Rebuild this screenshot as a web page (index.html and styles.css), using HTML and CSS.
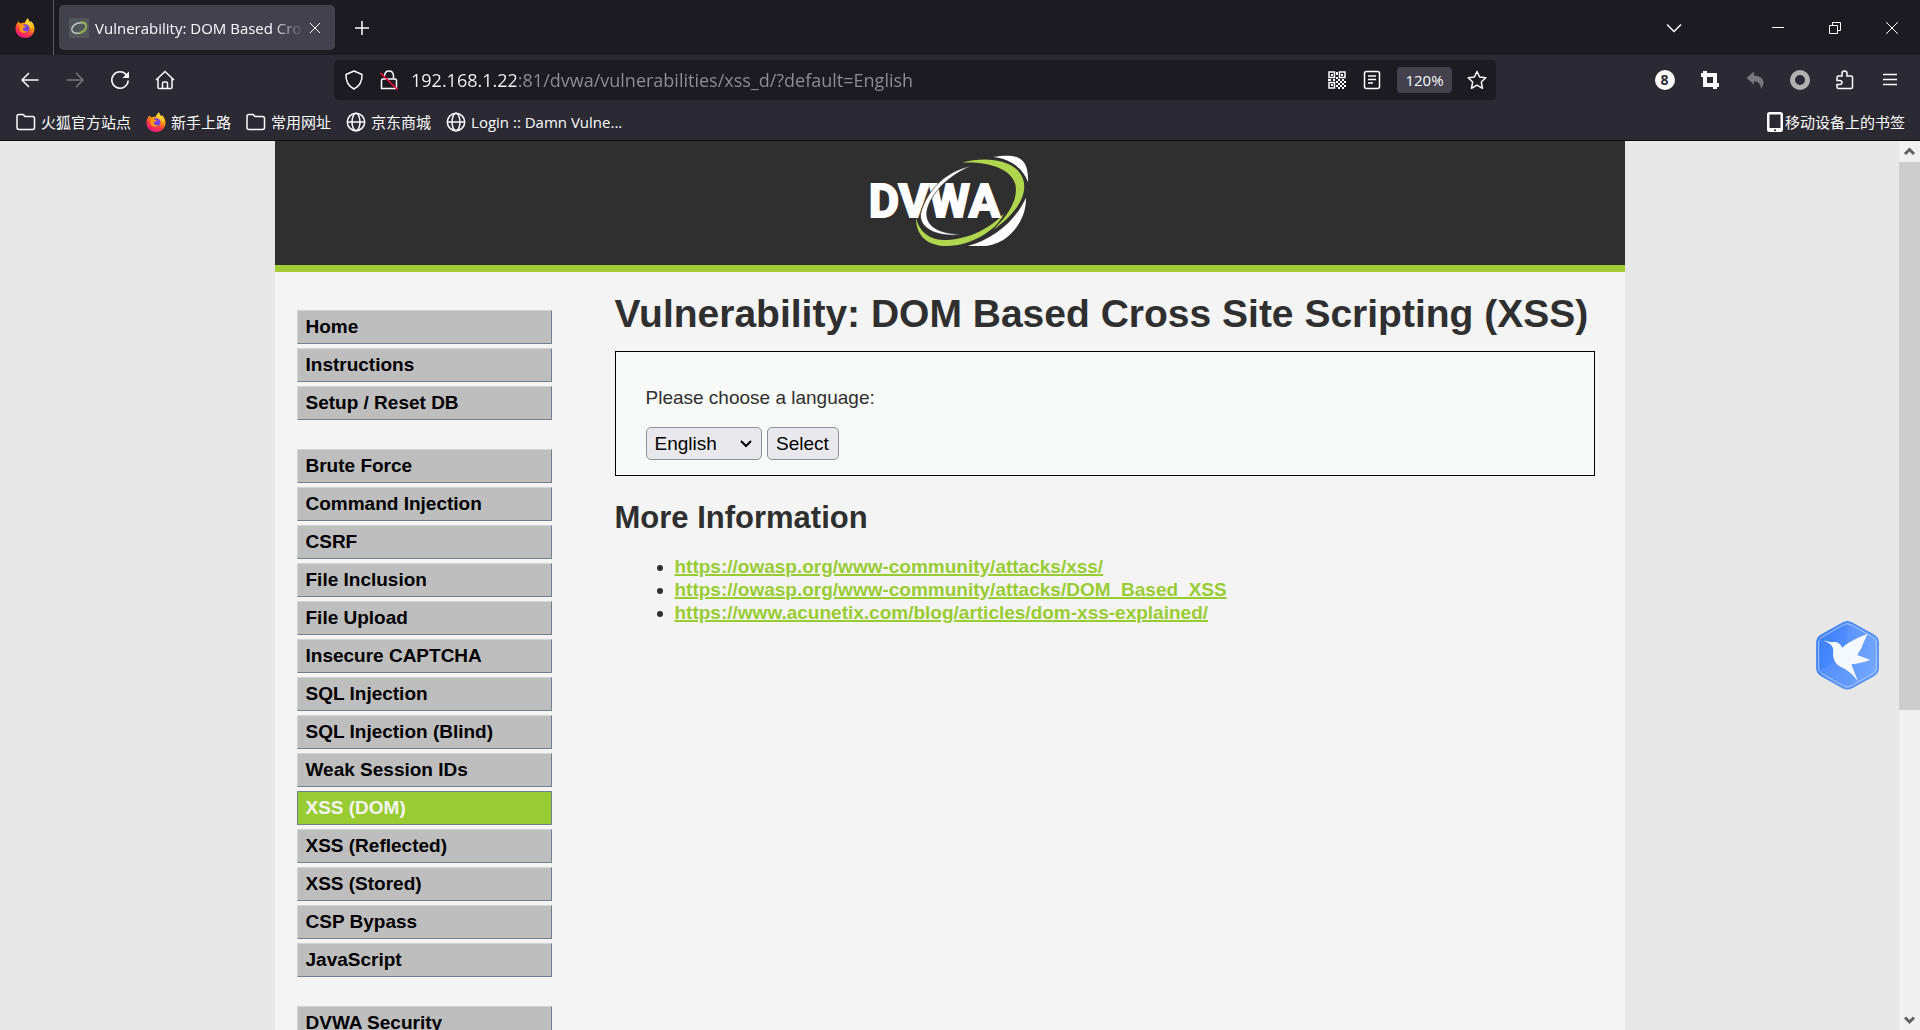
FILE: index.html
```html
<!DOCTYPE html>
<html lang="en">
<head>
<meta charset="utf-8">
<title>Vulnerability: DOM Based Cross Site Scripting (XSS)</title>
<link rel="stylesheet" href="styles.css">
</head>
<body>
<svg class="defs" aria-hidden="true">
  <defs>
    <linearGradient id="flame" x1="0.8" y1="0" x2="0.3" y2="1">
      <stop offset="0" stop-color="#fff44f"/><stop offset="0.4" stop-color="#ff980e"/>
      <stop offset="0.7" stop-color="#ff3647"/><stop offset="1" stop-color="#e31587"/>
    </linearGradient>
    <symbol id="firefox" viewBox="0 0 20 20">
      <path fill="url(#flame)" d="M3.500 3.500 5.500 5.500C7 4.500 8 4.500 9.500 5 10 3 11.500 1.500 13 .2 13.200 2 14 3 15.200 4.200L16 3C18.500 5.500 19.800 8.500 19.500 11.500 19 16.500 15 20 10 20 4.500 20 .5 16 .5 10.500.5 7.500 1.500 5.500 3.500 3.500Z"/>
      <circle cx="10.200" cy="10.500" r="4.200" fill="#7542e5"/>
      <path fill="#ff980e" d="M2.500 7.500C4.500 6 7 6 8.500 7.500L11 8.300C10.500 9.500 8.500 9.300 8 10.500 7.500 12.500 9.500 14 12.500 12.800 11 15.500 7.500 15.500 5.500 13.500 4 12 4 9 5 7.500Z"/>
      <path fill="#ffd335" d="M13 .2C13.200 3 17.500 5.500 16.500 11 15.500 9 14.500 6.500 11.500 6 10.500 5.500 10.500 3 13 .2Z"/>
    </symbol>
    <symbol id="folder" viewBox="0 0 20 20"><path d="M1 15.500V4.500Q1 2.500 3 2.500H6.500Q7.500 2.500 8.200 3.500L9 4.500H16.500Q18.500 4.500 18.500 6.500V15.500Q18.500 17.500 16.500 17.500H3Q1 17.500 1 15.500Z"/></symbol>
    <symbol id="globe" viewBox="0 0 20 20"><circle cx="10" cy="10" r="8.700"/><ellipse cx="10" cy="10" rx="4" ry="8.700"/><path d="M1.500 10H18.500"/></symbol>
    <symbol id="close" viewBox="0 0 20 20"><path d="M5 5 15 15M15 5 5 15"/></symbol>
  </defs>
</svg>

<header class="browser">
  <div class="tabstrip">
    <div class="pinned"><svg class="icon"><use href="#firefox"/></svg></div>
    <div class="tab">
      <svg class="icon" viewBox="0 0 20 20"><path class="fav-bg" d="M0 0H20V20H0Z"/><ellipse class="fav-ring" cx="10" cy="10" rx="7.500" ry="5" transform="rotate(-20 10 10)"/><path class="fav-green" d="M12 4Q18 4 17 9T10 15"/></svg>
      <span class="tab-title">Vulnerability: DOM Based Cro</span>
      <button class="tab-close" aria-label="Close tab"><svg class="icon"><use href="#close"/></svg></button>
    </div>
    <button class="tool new-tab" aria-label="New tab"><svg class="icon" viewBox="0 0 20 20"><path d="M10 3V17M3 10H17"/></svg></button>
    <div class="window-controls">
      <button class="tool list-tabs" aria-label="List all tabs"><svg class="icon" viewBox="0 0 20 20"><path d="M3 6.500 10 13.500 17 6.500"/></svg></button>
      <button class="win" aria-label="Minimize"><svg class="icon thin" viewBox="0 0 20 20"><path d="M4 9.500H16"/></svg></button>
      <button class="win" aria-label="Restore"><svg class="icon thin" viewBox="0 0 20 20"><path d="M4.500 7.500H12.500V15.500H4.500ZM7.500 7.500V4.500H15.500V12.500H12.500"/></svg></button>
      <button class="win" aria-label="Close"><svg class="icon thin" viewBox="0 0 20 20"><path d="M4 4 16 16M16 4 4 16"/></svg></button>
    </div>
  </div>

  <div class="navbar">
    <div class="nav-group">
      <button class="tool" aria-label="Back"><svg class="icon" viewBox="0 0 20 20"><path d="M18.500 10H2M9 3 2 10 9 17"/></svg></button>
      <button class="tool dim" aria-label="Forward"><svg class="icon" viewBox="0 0 20 20"><path d="M1.500 10H18M11 3 18 10 11 17"/></svg></button>
      <button class="tool" aria-label="Reload"><svg class="icon" viewBox="0 0 20 20"><path d="M16.500 5A8.200 8.200 0 1 0 18.200 10.500"/><path class="solid" d="M19 1.500V8H12.500Z"/></svg></button>
      <button class="tool" aria-label="Home"><svg class="icon" viewBox="0 0 20 20"><path d="M1 10 10 1.500 19 10M3 8.500V17.500Q3 18.500 4 18.500H16Q17 18.500 17 17.500V8.500M7.500 18.500V13.500Q7.500 12 9 12H11Q12.500 12 12.500 13.500V18.500"/></svg></button>
    </div>
    <div class="urlbar">
      <svg class="icon" viewBox="0 0 20 20"><path d="M10 1 18 4.500Q18.500 14.500 10 19 1.500 14.500 2 4.500Z" stroke-linejoin="round"/></svg>
      <svg class="icon" viewBox="0 0 20 20"><path d="M5.500 6V5.500Q6 1 10 1T14.500 5.500V9M2.500 18.500V10.500Q2.500 9 4 9H16Q17.500 9 17.500 10.500V18.500Z"/><path class="slash" d="M1.500 3 18.500 19.500"/></svg>
      <input class="url" type="text" aria-label="Address" value="192.168.1.22:81/dvwa/vulnerabilities/xss_d/?default=English">
      <svg class="icon" viewBox="0 0 20 20"><path d="M2 2H7.500V7.500H2ZM12.500 2H18V7.500H12.500ZM2 12.500H7.500V18H2Z"/><path class="solid" d="M4 4H6V6H4ZM14 4H16V6H14ZM4 14H6V16H4ZM9 2H11V5H9ZM9 7H11V9H9ZM1 9H4V11H1ZM6 9H8V11H6ZM11 9H13V11H11ZM15 9H17V11H15ZM9 11H11V13H9ZM13 11H15V13H13ZM17 11H19V13H17ZM11 13H13V15H11ZM15 13H17V15H15ZM9 15H11V17H9ZM13 15H15V17H13ZM17 15H19V17H17ZM11 17H13V19H11ZM15 17H17V19H15Z"/></svg>
      <svg class="icon" viewBox="0 0 20 20"><path d="M4.500 1.500H15.500Q17.500 1.500 17.500 3.500V16.500Q17.500 18.500 15.500 18.500H4.500Q2.500 18.500 2.500 16.500V3.500Q2.500 1.500 4.500 1.500ZM6 6H14M6 9.500H14M6 13H11"/></svg>
      <button class="zoom-level">120%</button>
      <svg class="icon" viewBox="0 0 20 20"><path stroke-linejoin="round" d="M10 1.500 12.600 7 18.800 7.700 14.300 12 15.500 18.300 10 15.200 4.500 18.300 5.700 12 1.200 7.700 7.400 7Z"/></svg>
    </div>
    <div class="nav-group">
      <button class="tool badge-tool" aria-label="Extension, 8 items"><span class="eight">8</span></button>
      <button class="tool" aria-label="Capture"><svg class="icon heavy" viewBox="0 0 20 20"><path d="M1 5H15V19M5 1V15H19"/></svg></button>
      <button class="tool dim" aria-label="Undo"><svg class="icon" viewBox="0 0 20 20"><path class="solid" d="M1.500 8 9 1.500V5.500Q18.500 6 18.500 13 18.500 16 16 19 15.500 11.500 9 11V14.500Z"/></svg></button>
      <button class="tool" aria-label="Proxy off"><svg class="icon" viewBox="0 0 20 20"><circle class="ring" cx="10" cy="10" r="7.500"/></svg></button>
      <button class="tool" aria-label="Extensions"><svg class="icon" viewBox="0 0 20 20"><path d="M2 7.500Q2 6 3.500 6H7V3.500Q7 1 9.500 1T12 3.500V6H16Q17.500 6 17.500 7.500V17Q17.500 18.500 16 18.500H3.500Q2 18.500 2 17V14.500H4.500Q7 14.500 7 12.500T4.500 10.500H2Z"/></svg></button>
      <button class="tool" aria-label="Menu"><svg class="icon" viewBox="0 0 20 20"><path d="M3 4.500H17M3 9.500H17M3 14.500H17"/></svg></button>
    </div>
  </div>

  <nav class="bookmarks" aria-label="Bookmarks">
    <a href="#"><svg class="icon"><use href="#folder"/></svg>火狐官方站点</a>
    <a href="#"><svg class="icon"><use href="#firefox"/></svg>新手上路</a>
    <a href="#"><svg class="icon"><use href="#folder"/></svg>常用网址</a>
    <a href="#"><svg class="icon"><use href="#globe"/></svg>京东商城</a>
    <a href="#"><svg class="icon"><use href="#globe"/></svg>Login :: Damn Vulne...</a>
    <a class="mobile" href="#"><svg class="icon phone" viewBox="0 0 16 20"><path class="solid" d="M2.500 0H13.500Q16 0 16 2.500V17.500Q16 20 13.500 20H2.500Q0 20 0 17.500V2.500Q0 0 2.500 0ZM2.500 2.500V16H13.500V2.500ZM7 17.500V19H9V17.500Z" fill-rule="evenodd"/></svg>移动设备上的书签</a>
  </nav>
</header>

<div class="viewport">
  <div class="scroll-area">
    <div class="container">
      <div class="masthead">
        <svg class="logo" viewBox="90 60 477 276" role="img" aria-label="DVWA">
          <path class="lime" d="M366 83C430 65 500 73 533 106 575 150 550 222 460 284 510 235 535 190 526 148 512 98 440 79 366 83Z"/>
          <path class="white" d="M460 66C490 61 512 61 530 66 553 74 566 96 564 142 552 104 515 72 460 66Z"/>
          <path class="white" d="M558 188C560 270 490 336 425 333H383C460 312 525 260 558 188Z"/>
          <path class="lime" d="M228 248C228 305 265 333 320 333 395 332 470 285 492 236 440 290 370 315 310 315 265 312 238 290 228 248Z"/>
          <text class="logo-text" x="86" y="247">DVWA</text>
          <path class="arc" d="M394 93C325 105 262 160 242 235 236 280 290 307 364 299 300 295 260 278 260 235 264 190 310 128 394 93Z"/>
        </svg>
      </div>
      <div class="columns">
        <nav class="menu" aria-label="Main">
          <ul>
            <li><a href="#">Home</a></li>
            <li><a href="#">Instructions</a></li>
            <li><a href="#">Setup / Reset DB</a></li>
          </ul>
          <ul>
            <li><a href="#">Brute Force</a></li>
            <li><a href="#">Command Injection</a></li>
            <li><a href="#">CSRF</a></li>
            <li><a href="#">File Inclusion</a></li>
            <li><a href="#">File Upload</a></li>
            <li><a href="#">Insecure CAPTCHA</a></li>
            <li><a href="#">SQL Injection</a></li>
            <li><a href="#">SQL Injection (Blind)</a></li>
            <li><a href="#">Weak Session IDs</a></li>
            <li><a class="selected" href="#">XSS (DOM)</a></li>
            <li><a href="#">XSS (Reflected)</a></li>
            <li><a href="#">XSS (Stored)</a></li>
            <li><a href="#">CSP Bypass</a></li>
            <li><a href="#">JavaScript</a></li>
          </ul>
          <ul>
            <li><a href="#">DVWA Security</a></li>
          </ul>
        </nav>
        <main class="content">
          <h1>Vulnerability: DOM Based Cross Site Scripting (XSS)</h1>
          <form class="vulnerable">
            <label for="language">Please choose a language:</label>
            <div class="form-row">
              <span class="select-wrap">
                <select id="language" name="default"><option>English</option><option>French</option><option>Spanish</option><option>German</option></select>
                <svg class="select-arrow" viewBox="0 0 12 8" aria-hidden="true"><path d="M1 1 6 6 11 1"/></svg>
              </span>
              <button class="submit" type="button">Select</button>
            </div>
          </form>
          <h2>More Information</h2>
          <ul class="links">
            <li><a href="#">https://owasp.org/www-community/attacks/xss/</a></li>
            <li><a href="#">https://owasp.org/www-community/attacks/DOM_Based_XSS</a></li>
            <li><a href="#">https://www.acunetix.com/blog/articles/dom-xss-explained/</a></li>
          </ul>
        </main>
      </div>
    </div>
  </div>
  <div class="scrollbar" aria-hidden="true">
    <svg class="scroll-arrow" viewBox="0 0 21 21"><path d="M6 13 10.500 8.500 15 13"/></svg>
    <div class="track"><div class="thumb"></div></div>
    <svg class="scroll-arrow" viewBox="0 0 21 21"><path d="M6 8.500 10.500 13 15 8.500"/></svg>
  </div>
  <svg class="bird" viewBox="105 60 195 213" role="img" aria-label="Download helper">
    <defs><linearGradient id="hex" x1="0" y1="0.3" x2="1" y2="0.6"><stop offset="0" stop-color="#3a7ffb"/><stop offset="1" stop-color="#6aa0fd"/></linearGradient></defs>
    <path fill="url(#hex)" stroke="#4a86ee" stroke-width="3" d="M189 68Q202 61 215 68L284 106Q295 113 295 126V206Q295 219 284 226L215 264Q202 271 189 264L121 226Q110 219 110 206V126Q110 113 121 106Z"/>
    <path fill="#fff" fill-opacity="0.080" d="M202 68V166L120 212Q145 245 202 268L290 215V118Z"/>
    <path fill="none" stroke="#a9c9ff" stroke-width="3" d="M191 74Q202 68 213 74L279 111Q289 117 289 128V204Q289 215 279 221L213 258Q202 264 191 258L126 221Q116 215 116 204V128Q116 117 126 111Z"/>
    <path fill="#f4f8ff" d="M128 121 155 127C168 123 181 128 187 143 205 125 235 112 263 101L248 134C245 147 236 155 232 165L271 180C252 187 232 191 214 193L234 244C220 225 205 212 188 203 165 195 156 175 160 150 158 135 148 130 128 121Z"/>
  </svg>
</div>
</body>
</html>
```
FILE: styles.css
```css
* { box-sizing: border-box; }

body {
  margin: 0;
  height: 100vh;
  display: flex;
  flex-direction: column;
  overflow: hidden;
  font-family: "Liberation Sans", sans-serif;
  font-size: 19px;
  line-height: 23px;
  color: #2f2f2f;
}

button { padding: 0; border: 0; background: none; color: inherit; font: inherit; }
.defs { position: absolute; width: 0; height: 0; }

/* Browser chrome */
.browser {
  flex: none;
  background: #2b2a33;
  border-bottom: 1px solid #0c0c0d;
  color: #fbfbfe;
  font-family: "Open Sans", "Noto Sans CJK SC", sans-serif;
  font-size: 15px;
  line-height: 20px;
}

.icon {
  display: block;
  flex: none;
  width: 20px;
  height: 20px;
  fill: none;
  stroke: currentColor;
  stroke-width: 1.5;
}
.icon use[href="#firefox"] { stroke: none; }
.icon .solid { fill: currentColor; stroke: none; }
.thin { stroke-width: 1; }
.heavy { stroke-width: 4; }
.slash { stroke: #ff0039; }
.ring { stroke: #b1b1b3; stroke-width: 5; }

.tabstrip { display: flex; align-items: center; height: 55px; background: #1c1b22; }
.pinned {
  display: flex;
  align-items: center;
  height: 55px;
  width: 54px;
  padding-left: 15px;
  border-right: 1px solid #5b5b66;
}
.tab {
  display: flex;
  align-items: center;
  width: 276px;
  height: 45px;
  margin-left: 5px;
  padding: 0 10px;
  border-radius: 5px;
  background: #42414d;
}
.fav-bg { fill: #50565a; stroke: none; }
.fav-ring { stroke: #c4c8c8; stroke-width: 1.5; }
.fav-green { stroke: #8faa4c; stroke-width: 2; }
.tab-title {
  flex: 1;
  min-width: 0;
  margin-left: 6px;
  overflow: hidden;
  white-space: nowrap;
  -webkit-mask-image: linear-gradient(to right, #000 84%, transparent);
  mask-image: linear-gradient(to right, #000 84%, transparent);
}
.tab-close .icon { stroke-width: 1; }

.tool { display: flex; align-items: center; justify-content: center; width: 45px; height: 40px; }
.dim { color: #78777d; }
.new-tab { margin-left: 4px; }
.window-controls { display: flex; align-items: center; margin-left: auto; }
.list-tabs { margin-right: 53px; }
.win { display: flex; align-items: center; justify-content: center; width: 57px; height: 40px; }

.navbar { display: flex; align-items: center; height: 50px; }
.nav-group { display: flex; padding: 0 8px 0 7px; }
.urlbar {
  flex: 1;
  display: flex;
  align-items: center;
  gap: 15px;
  max-width: 1162px;
  height: 40px;
  margin-left: 139px;
  margin-right: auto;
  padding: 0 9px 0 10px;
  border-radius: 5px;
  background: #1c1b22;
}
.url {
  flex: 1;
  min-width: 0;
  height: 30px;
  margin-left: -3px;
  padding: 0;
  border: 0;
  color: #fbfbfe;
  font: 18px/24px "Open Sans", sans-serif;
  background: linear-gradient(to right, #fbfbfe 105px, #8f8f96 105px);
  -webkit-background-clip: text;
  background-clip: text;
  -webkit-text-fill-color: transparent;
}
.zoom-level { width: 55px; height: 26px; border-radius: 4px; background: #42414d; }
.eight {
  width: 20px;
  height: 20px;
  border-radius: 50%;
  background: #fff;
  color: #2b2a33;
  font-size: 14px;
  font-weight: 700;
  text-align: center;
}

.bookmarks { display: flex; align-items: center; gap: 15px; height: 35px; padding: 0 15px 1px 16px; }
.bookmarks a {
  display: flex;
  align-items: center;
  gap: 5px;
  color: inherit;
  text-decoration: none;
  white-space: nowrap;
}
.bookmarks .mobile { gap: 2px; margin-left: auto; }
.phone { width: 16px; }

/* Page area */
.viewport { position: relative; flex: 1; min-height: 0; display: flex; background: #e7e7e7; }
.scroll-area { flex: 1; min-width: 0; overflow: hidden; }
.container { max-width: 1350px; margin: 0 auto; background: #f4f4f4; }

.masthead {
  display: flex;
  justify-content: center;
  padding: 14px 0 18px;
  background: #2f2f2f;
  border-bottom: 7px solid #a1cc33;
}
.logo { width: 159px; height: 92px; }
.lime { fill: #b0d54f; }
.white { fill: #fff; }
.arc { fill: #fff; stroke: #2f2f2f; stroke-width: 2; }
.logo-text {
  font-family: Roboto, sans-serif;
  font-weight: 700;
  font-size: 140px;
  fill: #fff;
  stroke: #fff;
  stroke-width: 6;
}

.columns { display: flex; gap: 63px; padding: 18px 30px 40px 22px; }

.menu { width: 255px; flex: none; padding-top: 20px; }
.menu ul { margin: 0 0 25px; padding: 0; list-style: none; }
.menu li { padding-bottom: 4px; }
.menu a {
  display: block;
  padding: 5px 8px;
  border: 1px solid;
  border-color: #d3d3d3 #708090 #708090 #d3d3d3;
  background: #bebebe;
  color: #000;
  font-weight: 700;
  line-height: 22px;
  text-decoration: none;
}
.menu .selected { background: #9c3; border-color: #708090; color: #f4f4f4; }

.content { flex: 1; min-width: 0; }
h1 { margin: 0 0 14px; font-size: 39px; line-height: 47px; white-space: nowrap; }
h2 { margin: 23px 0 19px; font-size: 31px; line-height: 37px; }

.vulnerable { padding: 34px 30px 15px; border: 1px solid #000; background: #f8faf9; }
.vulnerable label { display: block; }
.form-row { display: flex; gap: 5px; margin-top: 18px; }
.select-wrap { position: relative; display: flex; }
select, .submit {
  height: 33px;
  padding: 0 8px;
  border: 1px solid #8f8f9d;
  border-radius: 5px;
  background: #e9e9ed;
  color: #000;
  font: 19px/23px "Liberation Sans", sans-serif;
}
select { width: 116px; appearance: none; }
.submit { width: 72px; }
.select-arrow {
  position: absolute;
  right: 10px;
  top: 13px;
  width: 12px;
  height: 8px;
  fill: none;
  stroke: #000;
  stroke-width: 2;
  pointer-events: none;
}

.links { margin: 0; padding-left: 60px; }
.links a { color: #9c3; font-weight: 700; text-decoration-thickness: 2px; }

.scrollbar { display: flex; flex-direction: column; flex: none; width: 21px; background: #f0f0f0; }
.scroll-arrow { display: block; width: 21px; height: 21px; fill: none; stroke: #606060; stroke-width: 3; }
.track { flex: 1; }
.thumb { height: 548px; max-height: 65%; background: #cdcdcd; }

.bird { position: absolute; right: 40px; top: 479px; width: 65px; height: 71px; }
```
